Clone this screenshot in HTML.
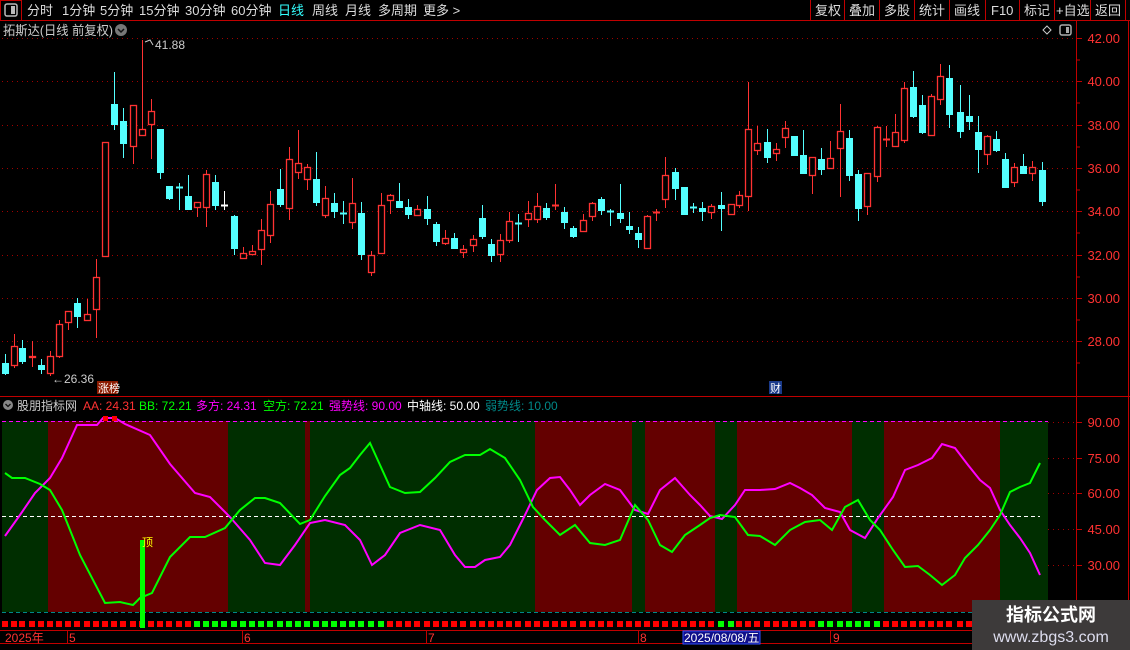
<!DOCTYPE html>
<html><head><meta charset="utf-8">
<style>
html,body{margin:0;padding:0;background:#000;width:1130px;height:650px;overflow:hidden}
svg{display:block}
text{font-family:"Liberation Sans","Noto Sans CJK SC",sans-serif}
</style></head><body>
<svg id="s" width="1130" height="650" xmlns="http://www.w3.org/2000/svg">
<rect width="1130" height="650" fill="#000"/>
<line x1="0" y1="20.5" x2="1130" y2="20.5" stroke="#c00000"/>
<rect x="0.5" y="0.5" width="21" height="20" fill="none" stroke="#c00000"/>
<rect x="5" y="4" width="12" height="12" rx="2" fill="none" stroke="#bbb" stroke-width="1.5"/>
<rect x="11" y="6" width="4" height="8" fill="#bbb"/>
<g font-size="13" fill="#ddd">
<text x="27" y="15">分时</text><text x="62" y="15">1分钟</text><text x="100" y="15">5分钟</text><text x="139" y="15">15分钟</text><text x="185" y="15">30分钟</text><text x="231" y="15">60分钟</text>
<text x="278" y="15" fill="#3ff">日线</text><text x="312" y="15">周线</text><text x="345" y="15">月线</text><text x="378" y="15">多周期</text><text x="423" y="15">更多 &gt;</text>
</g>
<g stroke="#c00000">
<line x1="810.5" y1="0" x2="810.5" y2="20"/><line x1="844.5" y1="0" x2="844.5" y2="20"/><line x1="879.5" y1="0" x2="879.5" y2="20"/><line x1="914.5" y1="0" x2="914.5" y2="20"/><line x1="949.5" y1="0" x2="949.5" y2="20"/><line x1="985.5" y1="0" x2="985.5" y2="20"/><line x1="1019.5" y1="0" x2="1019.5" y2="20"/><line x1="1054.5" y1="0" x2="1054.5" y2="20"/><line x1="1090.5" y1="0" x2="1090.5" y2="20"/><line x1="1125.5" y1="0" x2="1125.5" y2="20"/>
</g>
<g font-size="13" fill="#ddd">
<text x="815" y="15">复权</text><text x="849" y="15">叠加</text><text x="884" y="15">多股</text><text x="919" y="15">统计</text><text x="954" y="15">画线</text><text x="991" y="15">F10</text><text x="1024" y="15">标记</text><text x="1056" y="15">+自选</text><text x="1095" y="15">返回</text>
</g>
<text x="3" y="35" font-size="13" fill="#ccc" textLength="110" lengthAdjust="spacingAndGlyphs">拓斯达(日线 前复权)</text>
<circle cx="121" cy="30" r="6" fill="#777"/><path d="M118 29 L121 32 L124 29" stroke="#111" stroke-width="1.5" fill="none"/>
<path d="M1047 26 L1051 30 L1047 34 L1043 30 Z" fill="none" stroke="#ccc"/>
<rect x="1060" y="25" width="11" height="10" rx="2" fill="none" stroke="#aaa" stroke-width="1.5"/><rect x="1066" y="27" width="3" height="6" fill="#aaa"/>
<g id="grid" stroke="#a00000" stroke-dasharray="1,4"></g>
<line x1="1076.5" y1="21" x2="1076.5" y2="650" stroke="#c00000"/>
<line x1="1128.5" y1="21" x2="1128.5" y2="650" stroke="#c00000"/>
<line x1="0" y1="396.5" x2="1130" y2="396.5" stroke="#c00000"/>
<g id="axis" font-size="13" fill="#ff3232"></g>
<g id="cd"></g>
<text x="52" y="383" font-size="12" fill="#ccc">←26.36</text>
<path d="M145 42 L150 40 L153 45" stroke="#ccc" fill="none"/>
<text x="155" y="49" font-size="12" fill="#ccc">41.88</text>
<rect x="97" y="381" width="21" height="13" fill="#8b1a00"/><text x="98" y="392" font-size="11" fill="#fff">涨榜</text>
<rect x="769" y="381" width="13" height="13" fill="#1a3a8a"/><text x="770" y="392" font-size="11" fill="#fff">财</text>
<circle cx="8" cy="405" r="5" fill="#888"/><path d="M5.5 404 L8 406.5 L10.5 404" stroke="#111" stroke-width="1.3" fill="none"/>
<g font-size="12">
<text x="17" y="410" fill="#ccc">股朋指标网</text>
<text x="83" y="410" fill="#ff3232">AA: 24.31</text>
<text x="139" y="410" fill="#0f0">BB: 72.21</text>
<text x="196" y="410" fill="#f0f">多方: 24.31</text>
<text x="263" y="410" fill="#0f0">空方: 72.21</text>
<text x="329" y="410" fill="#f0f">强势线: 90.00</text>
<text x="407" y="410" fill="#fff">中轴线: 50.00</text>
<text x="485" y="410" fill="#088">弱势线: 10.00</text>
</g>
<g id="blk"></g>
<line x1="2" y1="421.5" x2="1048" y2="421.5" stroke="#f0f" stroke-dasharray="4,3"/>
<line x1="2" y1="516.5" x2="1040" y2="516.5" stroke="#fff" stroke-dasharray="4,3"/>
<line x1="2" y1="612.5" x2="1076" y2="612.5" stroke="#088" stroke-dasharray="4,3"/>
<g id="ln"></g>
<g id="dots"></g>
<rect x="140" y="540" width="5" height="88" fill="#0f0"/>
<text x="142" y="546" font-size="11" fill="#ff0">顶</text>
<line x1="0" y1="630.5" x2="1076" y2="630.5" stroke="#c00000"/>
<line x1="0" y1="643.5" x2="1076" y2="643.5" stroke="#c00000"/>
<g stroke="#c00000"><line x1="67.5" y1="630" x2="67.5" y2="643"/><line x1="242.5" y1="630" x2="242.5" y2="643"/><line x1="426.5" y1="630" x2="426.5" y2="643"/><line x1="638.5" y1="630" x2="638.5" y2="643"/><line x1="830.5" y1="630" x2="830.5" y2="643"/></g>
<g font-size="12" fill="#ff3232"><text x="5" y="642">2025年</text><text x="69" y="642">5</text><text x="244" y="642">6</text><text x="428" y="642">7</text><text x="640" y="642">8</text><text x="833" y="642">9</text></g>
<rect x="683" y="631" width="77" height="13" fill="#10108a" stroke="#3050ff"/>
<text x="684" y="642" font-size="12" fill="#fff">2025/08/08/五</text>
<rect x="972" y="600" width="158" height="50" fill="#3d3a3a"/>
<text x="1051" y="621" font-size="18" font-weight="bold" fill="#fff" text-anchor="middle">指标公式网</text>
<text x="1051" y="642" font-size="16" fill="#dde" text-anchor="middle">www.zbgs3.com</text>
</svg>
<script>
var NS="http://www.w3.org/2000/svg";
function el(p,t,a){var e=document.createElementNS(NS,t);for(var k in a)e.setAttribute(k,a[k]);document.getElementById(p).appendChild(e);return e;}
[38,81,125,168,211,255,298,341].forEach(function(y,i){
 el("grid","line",{x1:2,y1:y+.5,x2:1076,y2:y+.5});
 var t=el("axis","text",{x:1120,y:y+5,"text-anchor":"end"});t.textContent=(42-2*i).toFixed(2);
 el("axis","line",{x1:1076,y1:y+.5,x2:1082,y2:y+.5,stroke:"#c00000"});
 el("axis","line",{x1:1076,y1:y+22,x2:1080,y2:y+22,stroke:"#c00000"});
});
[[422,90],[458,75],[493,60],[529,45],[565,30]].forEach(function(a){
 var t=el("axis","text",{x:1120,y:a[0]+5,"text-anchor":"end"});t.textContent=a[1].toFixed(2);
 el("axis","line",{x1:1076,y1:a[0]+.5,x2:1082,y2:a[0]+.5,stroke:"#c00000"});
 el("grid","line",{x1:1048,y1:a[0]+.5,x2:1076,y2:a[0]+.5});
});
var C=[[4.5,'c',363,373,354,374],[13.5,'r',346,365,334,367],[22,'c',348,361,340,363],[32,'r',356,357,341,366],[41,'c',365,369,359,373],[50,'r',356,373,351,375],[59,'r',324,356,320,357],[68,'r',311,322,311,329],[77,'c',303,316,298,327],[87,'r',314,320,299,320],[96,'r',277,309,259,337],[105,'r',142,256,142,256],[114,'c',104,124,72,129],[123,'c',121,143,108,157],[133,'r',105,146,105,163],[142,'r',129,135,40,135],[151,'r',111,124,99,158],[160,'c',129,172,129,178],[169,'c',186,198,186,199],[179,'c',187,187,183,209],[188,'c',196,209,175,209],[197,'r',202,207,202,216],[206,'r',174,207,170,226],[215,'c',182,205,175,209],[224,'w',205,205,191,209],[234,'c',216,248,215,254],[243,'r',253,258,247,258],[252,'r',251,254,245,254],[261,'r',230,249,219,264],[270,'r',204,235,191,242],[280,'c',189,204,169,206],[289,'r',159,208,147,219],[298,'r',163,172,130,178],[307,'r',167,179,164,189],[316,'c',179,202,152,205],[325,'r',198,215,186,217],[334,'c',203,211,193,217],[343,'c',213,213,201,223],[352,'r',203,222,178,228],[361,'c',213,254,202,259],[371,'r',255,272,251,275],
[381,'r',205,253,193,253],[390,'r',195,200,194,213],[399,'c',201,207,183,207],[408,'c',207,214,199,218],[417,'r',209,215,205,215],[427,'c',209,218,196,224],[436,'c',224,241,222,245],[445,'r',238,243,230,244],[454,'c',238,248,233,248],[463,'r',249,252,245,257],[473,'r',239,245,235,251],[482,'c',218,236,205,238],[491,'c',244,255,239,261],[500,'r',240,254,234,261],[509,'r',221,240,212,242],[518,'c',223,223,214,241],[528,'r',213,219,201,226],[537,'r',206,219,193,222],[546,'c',208,217,203,219],[555,'r',205,205,184,209],[564,'c',212,222,207,228],[573,'c',228,236,226,237],[583,'r',220,231,214,231],[592,'r',203,216,202,220],[601,'c',199,210,197,214],[610,'c',211,211,209,225],[620,'c',213,218,184,222],[629,'c',226,229,212,233],[638,'c',233,239,227,247],[647,'r',216,248,215,248],[656,'r',212,212,209,220],[665,'r',175,199,157,207],[675,'c',172,188,168,199],[684,'c',187,214,187,214],[693,'c',207,207,203,212],[702,'c',208,211,202,220],[711,'r',206,212,204,218],[721,'c',205,208,192,230],[731,'r',204,214,204,214],
[739,'r',195,205,191,207],[748,'r',129,196,82,210],[757,'r',143,150,126,154],[767,'c',142,157,129,162],[776,'r',149,153,143,160],[785,'r',128,137,121,147],[794,'c',136,155,136,155],[803,'c',155,173,130,173],[812,'r',157,175,157,193],[821,'c',159,169,148,174],[830,'r',158,168,141,168],[840,'r',131,148,104,196],[849,'c',138,175,130,180],[858,'c',174,208,170,220],[867,'r',173,206,173,214],[877,'r',127,176,126,181],[886,'r',139,139,126,146],[895,'r',132,146,114,146],[904,'r',88,140,82,142],[913,'c',87,116,71,117],[922,'c',105,132,95,133],[931,'r',96,135,94,135],[940,'r',76,99,64,104],[949,'c',78,114,65,127],[960,'c',112,131,85,137],[969,'c',116,121,95,129],[978,'c',132,149,116,172],[987,'r',136,154,135,164],[996,'c',139,150,131,151],[1005,'c',159,187,153,187],[1014,'r',167,182,163,186],[1023,'c',166,173,154,173],[1032,'r',167,173,161,180],[1042,'c',170,201,162,205]];
C.forEach(function(c){
 var x=Math.round(c[0]),col=c[1]=='r'?'#ff3232':c[1]=='c'?'#54ffff':'#fff';
 el("cd","line",{x1:x+.5,y1:c[4],x2:x+.5,y2:c[5]+1,stroke:col});
 var h=c[3]-c[2];
 if(h<1){el("cd","line",{x1:x-3,y1:c[2]+.5,x2:x+4,y2:c[2]+.5,stroke:col,"stroke-width":2});}
 else if(c[1]=='r'){el("cd","rect",{x:x-2.5,y:c[2]+.5,width:6,height:h,fill:"#000",stroke:col,"stroke-width":1.3});}
 else{el("cd","rect",{x:x-3,y:c[2],width:7,height:h+1,fill:col});}
});
var G="#002e00",R="#640000";
[[2,48,G],[48,228,R],[228,305,G],[305,310,R],[310,535,G],[535,632,R],[632,645,G],[645,715,R],[715,737,G],[737,852,R],[852,884,G],[884,1000,R],[1000,1048,G]].forEach(function(b){
 el("blk","rect",{x:b[0],y:421,width:b[1]-b[0],height:191,fill:b[2]});});
var M=[[5,536],[20,515],[35,493],[50,478],[62,458],[77,425],[97,425],[103,418],[115,418],[125,424],[150,435],[170,464],[195,493],[210,497],[230,517],[250,540],[265,563],[280,565],[295,545],[310,523],[325,520],[345,525],[360,540],[372,565],[385,555],[400,533],[420,525],[440,530],[455,555],[465,567],[475,567],[485,560],[500,557],[510,545],[525,515],[537,490],[550,478],[560,477],[570,490],[580,505],[590,495],[605,484],[620,490],[635,510],[648,514],[660,490],[675,478],[690,495],[700,505],[710,516],[722,519],[735,505],[745,490],[760,490],[775,489],[790,483],[800,488],[812,495],[825,508],[840,512],[850,530],[865,538],[878,518],[893,497],[905,470],[918,465],[932,458],[942,444],[955,448],[968,465],[980,480],[990,488],[1000,510],[1010,525],[1020,538],[1030,553],[1040,575]];
var B=[[5,473],[12,478],[25,478],[40,484],[50,490],[62,510],[80,555],[105,603],[120,602],[133,605],[140,598],[152,593],[170,557],[190,537],[205,537],[225,528],[240,510],[255,498],[265,498],[280,503],[300,524],[310,520],[325,496],[340,475],[350,468],[360,455],[370,443],[380,465],[390,487],[405,493],[420,492],[435,478],[450,462],[465,455],[480,455],[490,449],[505,458],[520,480],[533,507],[545,520],[560,535],[575,525],[590,543],[605,545],[620,540],[635,505],[648,520],[660,545],[672,552],[685,535],[700,525],[710,518],[720,515],[735,517],[748,535],[760,536],[775,545],[790,530],[805,522],[820,520],[832,530],[845,507],[858,500],[870,520],[880,530],[893,550],[905,567],[918,566],[930,575],[942,585],[955,575],[965,558],[978,545],[990,530],[1000,515],[1010,492],[1020,487],[1030,483],[1040,463]];
function pl(a,c){el("ln","polyline",{points:a.map(function(p){return p.join(",")}).join(" "),fill:"none",stroke:c,"stroke-width":2});}
pl(M,"#f0f");pl(B,"#0f0");
el("ln","rect",{x:103,y:416,width:5,height:5,fill:"#f00"});el("ln","rect",{x:112,y:416,width:5,height:5,fill:"#f00"});
C.forEach(function(c,i){var x=Math.round(c[0]);var g=(x>=195&&x<=381)||(x>=720&&x<=732)||(x>=820&&x<=878);
 el("dots","rect",{x:x-3,y:621,width:6,height:6,fill:g?"#0f0":"#f00"});});
for(var x=1051;x<1076;x+=9)el("dots","rect",{x:x-3,y:621,width:6,height:6,fill:"#f00"});
</script>
</body></html>
